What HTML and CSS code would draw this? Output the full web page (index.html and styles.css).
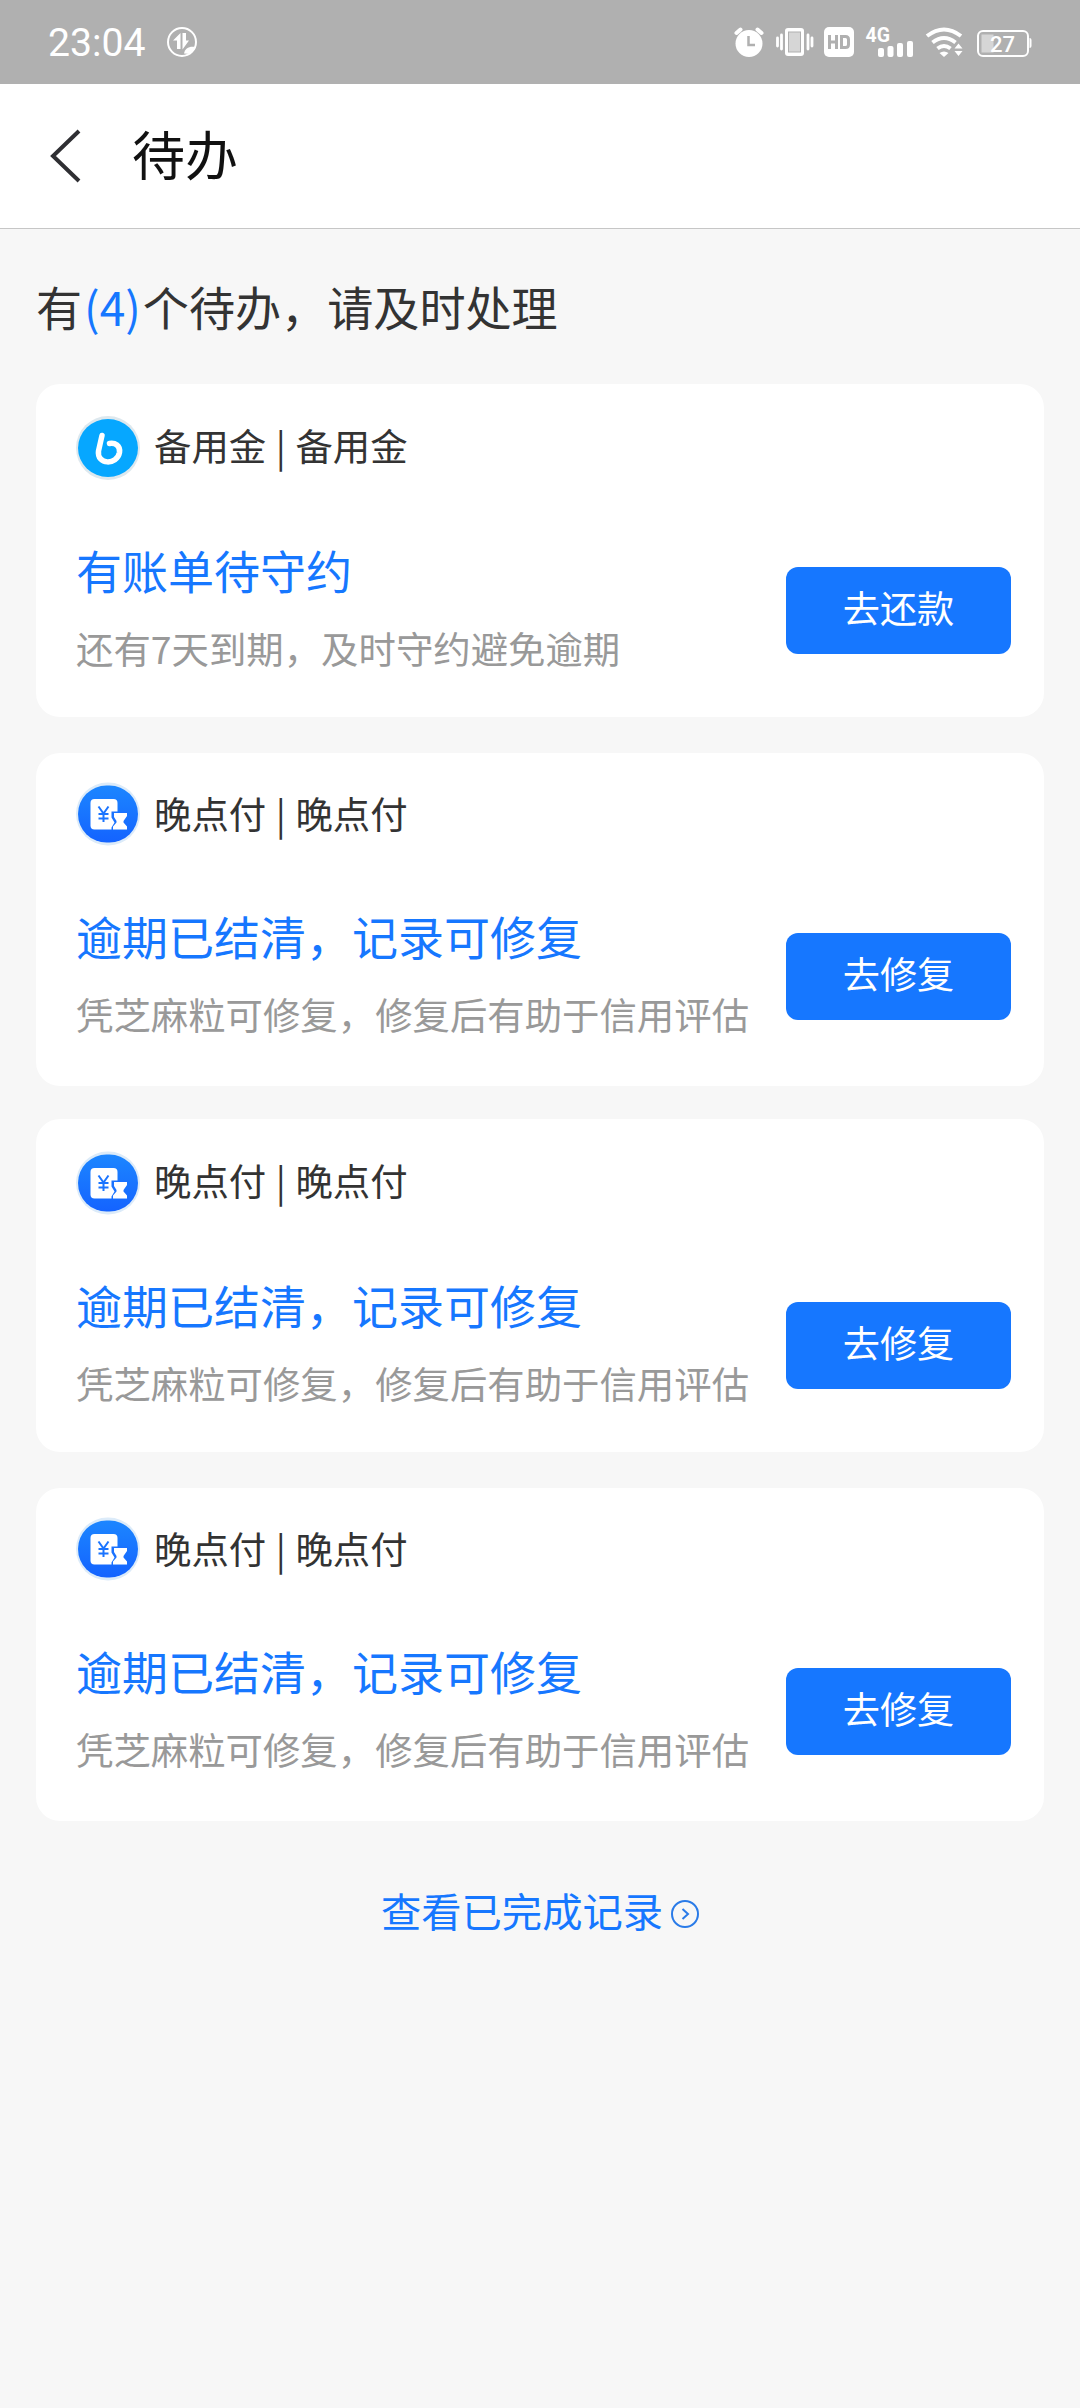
FILE: index.html
```
<!DOCTYPE html>
<html lang="zh-CN">
<head>
    <meta charset="UTF-8">
    <title>待办</title>
    <link rel="stylesheet" href="styles.css">
</head>
<body>
<svg width="0" height="0" class="defs">
    <defs>
        <linearGradient id="blue" x1="0" y1="0" x2="0" y2="1">
            <stop offset="0" stop-color="#1c86ff"/>
            <stop offset="1" stop-color="#1463ff"/>
        </linearGradient>
        <symbol id="later" viewBox="0 0 64 64">
            <rect x="0" y="0.500" width="64" height="63" rx="31.500" fill="#dcebf9"/>
            <rect x="2" y="3.500" width="60" height="57" rx="28.500" fill="url(#blue)"/>
            <rect x="14.500" y="17" width="27" height="30.500" rx="4" fill="#fff"/>
            <path d="M22.500 24.500l5 7 5-7M27.500 31v9M22.500 32h10M22.500 36.500h10" fill="none" stroke="#1a74ff" stroke-width="2"/>
            <path d="M35.500 29.500h16v6l-3.500 5 3.500 5v2.500h-16v-2.500l3-5-3-5z" fill="#1a72ff"/>
            <path d="M38 31h13v3l-3.500 5v1.500l3.500 4v3H37V44.500l3.500-4V39L38 35z" fill="#fff"/>
        </symbol>
    </defs>
</svg>
<div id="status">
    <span class="time">23:04</span>
    <svg class="nfc" width="30" height="30" viewBox="0 0 30 30">
        <circle cx="15" cy="15" r="14" fill="none" stroke="#fff" stroke-width="2"/>
        <path d="M13.500 22V6L6 13.500h4V22zM15.500 6v16.500l6.500-9h-3V6z" fill="#fff"/>
        <path d="M17 26.500c1-5 5-7.500 11-6.500l-5 7z" fill="#fff"/>
    </svg>
    <svg class="signs" width="300" height="32" viewBox="0 0 300 32">
        <g fill="#fff">
            <circle cx="15" cy="16.500" r="13.500"/>
            <path d="M2.500 6l4-3.500M23.500 2.500l4 3.500" stroke="#fff" stroke-width="4" stroke-linecap="round"/>
            <path d="M14.500 9v9H21" fill="none" stroke="#b0b0b0" stroke-width="2.500"/>
            <rect x="51" y="1" width="19" height="28" rx="3"/>
            <rect x="54.500" y="5" width="12" height="20" fill="#d6d6d6" stroke="#b0b0b0"/>
            <path d="M43.500 11v8M47.500 8v14M74 8v14M78 11v8" stroke="#fff" stroke-width="2.800" stroke-linecap="round"/>
            <rect x="90" y="0" width="30" height="30" rx="5"/>
            <path d="M95.500 8v14M102.500 8v14M95.500 15h7M107.500 9.500h4q3 0 3 3v5q0 3-3 3h-4z" fill="none" stroke="#b0b0b0" stroke-width="3"/>
            <text x="131.500" y="15" class="net">4G</text>
            <rect x="144" y="21" width="6" height="9" rx="2"/>
            <rect x="153.500" y="19" width="6" height="11" rx="2"/>
            <rect x="163" y="16" width="6" height="14" rx="2"/>
            <rect x="173" y="14" width="6" height="16" rx="2"/>
            <path d="M193 9q17-13 34 0M198.500 15.500q11.500-9 23 0M203.500 21.500q6.500-5 13 0" fill="none" stroke="#fff" stroke-width="4"/>
            <path d="M205.500 26q4.500-3 9 0l-4.500 4z"/>
            <path d="M224.500 16.500l4 5h-8zM224.500 29l4-5h-8z"/>
            <rect x="244" y="4" width="50" height="25" rx="5" fill="none" stroke="#fff" stroke-width="2"/>
            <rect x="247.500" y="7.500" width="12" height="18" fill="#d6d6d6"/>
            <path d="M295.500 11q2 0 2 2v6q0 2-2 2z"/>
            <text x="256" y="24.500" class="power">27</text>
        </g>
    </svg>
</div>
<div id="header">
    <svg class="back" width="34" height="54" viewBox="0 0 34 54">
        <path d="M31 2L5 27l26 25" fill="none" stroke="#2f2f33" stroke-width="4"/>
    </svg>
    <h1>待办</h1>
</div>
<div id="container">
    <h2>有<span>(4)</span>个待办，请及时处理</h2>
    <ul id="list">
        <li>
            <div class="name">
                <svg width="64" height="64" viewBox="0 0 64 64">
                    <circle cx="32" cy="32" r="32" fill="#dde8ee"/>
                    <ellipse cx="32" cy="32" rx="30" ry="29" fill="#06a7ff"/>
                    <path d="M26 19.500L22.500 35C20.500 49 41 49.500 43.500 36.500 44.500 29.500 39 26.500 33.500 27.500" fill="none" stroke="#fff" stroke-width="5.500" stroke-linecap="round" stroke-linejoin="round"/>
                </svg>
                <span>备用金 | 备用金</span>
            </div>
            <div class="info">
                <div class="text">
                    <h3>有账单待守约</h3>
                    <p>还有7天到期，及时守约避免逾期</p>
                </div>
                <a class="btn">去还款</a>
            </div>
        </li>
        <li class="even">
            <div class="name">
                <svg width="64" height="64"><use href="#later"/></svg>
                <span>晚点付 | 晚点付</span>
            </div>
            <div class="info">
                <div class="text">
                    <h3>逾期已结清，记录可修复</h3>
                    <p>凭芝麻粒可修复，修复后有助于信用评估</p>
                </div>
                <a class="btn">去修复</a>
            </div>
        </li>
        <li>
            <div class="name">
                <svg width="64" height="64"><use href="#later"/></svg>
                <span>晚点付 | 晚点付</span>
            </div>
            <div class="info">
                <div class="text">
                    <h3>逾期已结清，记录可修复</h3>
                    <p>凭芝麻粒可修复，修复后有助于信用评估</p>
                </div>
                <a class="btn">去修复</a>
            </div>
        </li>
        <li class="even">
            <div class="name">
                <svg width="64" height="64"><use href="#later"/></svg>
                <span>晚点付 | 晚点付</span>
            </div>
            <div class="info">
                <div class="text">
                    <h3>逾期已结清，记录可修复</h3>
                    <p>凭芝麻粒可修复，修复后有助于信用评估</p>
                </div>
                <a class="btn">去修复</a>
            </div>
        </li>
    </ul>
    <a id="more">查看已完成记录
        <svg width="28" height="28" viewBox="0 0 28 28">
            <path d="M11.500 9l5.500 5-5.500 5" fill="none" stroke="#2a7be8" stroke-width="2"/>
            <circle cx="14" cy="14" r="13" fill="none" stroke="#2a7be8" stroke-width="2"/>
        </svg>
    </a>
</div>
</body>
</html>
```
FILE: styles.css
```
*{
    margin: 0;
    padding: 0;
    box-sizing: border-box;
}
body{
    background: #f7f7f7;
    font-family: "Noto Sans CJK SC", sans-serif;
    color: #333;
}
ul{
    list-style: none;
}
h1, h2, h3{
    font-weight: normal;
}
.defs{
    display: block;
}
#status{
    display: flex;
    align-items: flex-start;
    height: 84px;
    padding: 27px 46px 0 48px;
    background: #b0b0b0;
    color: #fff;
}
#status .time{
    width: 119px;
    font: 39.2px/32px Roboto, sans-serif;
}
#status .signs{
    margin-left: auto;
    overflow: visible;
}
.net{
    font: bold 19.5px Roboto, sans-serif;
}
.power{
    font: 500 22px Roboto, sans-serif;
}
#header{
    display: flex;
    align-items: center;
    height: 145px;
    padding-left: 48px;
    background: #fff;
    border-bottom: 1px solid #c6c6c6;
}
#header h1{
    margin: -7px 0 0 50px;
    font-size: 53px;
    line-height: 80px;
    color: #111;
}
#container{
    padding: 0 36px;
}
#container h2{
    height: 155px;
    padding-top: 44px;
    font-size: 46.1px;
    line-height: 66px;
}
#container h2 span{
    color: #1677ff;
    padding: 0 2px;
}
#list li{
    height: 333px;
    margin-bottom: 36px;
    padding: 32px 33px 0 40px;
    background: #fff;
    border-radius: 24px;
}
#list li.even{
    margin-bottom: 33px;
    padding-top: 29px;
}
#list li:last-child{
    margin-bottom: 36px;
}
.name{
    display: flex;
    align-items: center;
    height: 64px;
    font-size: 37.4px;
    word-spacing: 1.2px;
}
.name span{
    margin: -7px 0 0 14px;
    line-height: 56px;
}
.even .name span{
    margin-top: -2px;
}
.info{
    display: flex;
    justify-content: space-between;
    padding-top: 56px;
}
.info h3{
    font-size: 46px;
    line-height: 66px;
    color: #1677ff;
}
.info p{
    margin-top: 18px;
    font-size: 37.4px;
    line-height: 56px;
    color: #999;
    white-space: nowrap;
}
.btn{
    width: 225px;
    height: 87px;
    margin-top: 31px;
    border-radius: 12px;
    background: #1677ff;
    color: #fff;
    font-size: 37.2px;
    line-height: 80px;
    text-align: center;
}
#more{
    display: flex;
    justify-content: center;
    align-items: center;
    gap: 8px;
    padding-top: 23px;
    font-size: 40.3px;
    line-height: 60px;
    color: #1677ff;
}
#more svg{
    margin-top: 7px;
}
```
